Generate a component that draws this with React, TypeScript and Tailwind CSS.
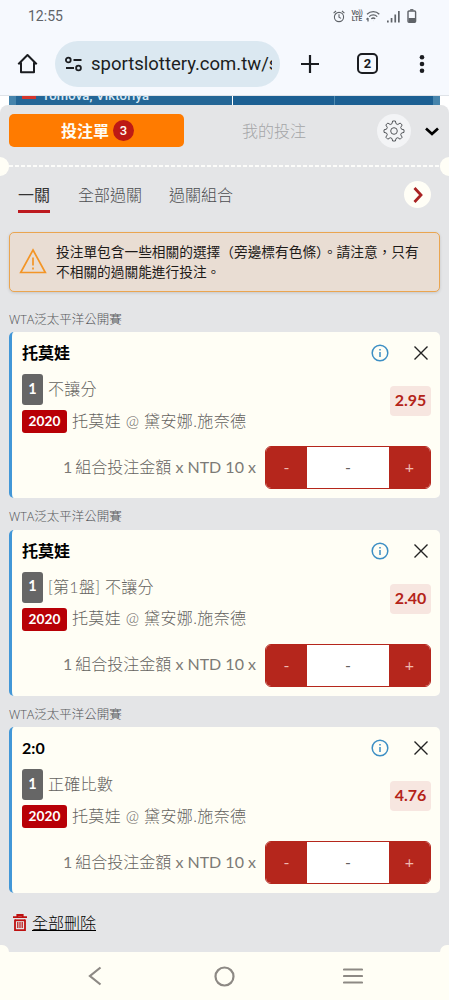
import React from 'react';

interface Bet {
  title: string;
  market: string;
  odds: string;
}

const bets: Bet[] = [
  { title: '托莫娃', market: '不讓分', odds: '2.95' },
  { title: '托莫娃', market: '[第1盤] 不讓分', odds: '2.40' },
  { title: '2:0', market: '正確比數', odds: '4.76' },
];

const StatusBar: React.FC = () => (
  <div className="flex h-8 items-center justify-between pl-7 pr-8 font-['Roboto',sans-serif] text-[#5f6368]">
    <span className="text-[14px] leading-none">12:55</span>
    <div className="flex items-center">
      <svg width="12" height="13" viewBox="0 0 12 13" fill="none" stroke="currentColor" strokeWidth="1.1">
        <circle cx="6" cy="7" r="4.6" />
        <path d="M6 4.3v2.9l2 1.2M.6 3.2 3 1M11.4 3.2 9 1" />
      </svg>
      <div className="ml-[6px] w-[12px] text-center text-[6.5px] font-bold leading-[6px]">
        <div className="tracking-[-0.3px]">Vo))</div>
        <div>LTE</div>
      </div>
      <svg className="ml-[3px]" width="14" height="12" viewBox="0 0 14 12" fill="none" stroke="currentColor" strokeWidth="1.3">
        <path d="M1 4.2C4.6.7 10 .7 13.3 4.2M3.2 6.6c2.3-2.2 5.8-2.2 8 0M5.3 8.8c1.2-1 2.8-1 3.9 0" />
        <path d="M7.2 10.5h.1M2 8v3.5M.5 9.5 2 8" />
      </svg>
      <svg className="ml-[7px]" width="13" height="13" viewBox="0 0 13 13" fill="currentColor">
        <path d="M0 10.5h1.7v2H0zM3.7 8h1.7v4.5H3.7zM7.4 4.500h1.7v8H7.4zM11 1h1.7v11.500H11z" />
      </svg>
      <svg className="ml-[7px]" width="10" height="14" viewBox="0 0 10 14" fill="none" stroke="currentColor" strokeWidth="1.4">
        <rect x="1" y="2" width="7.6" height="11.2" rx="1" />
        <path d="M3.2.8h3.2" />
        <path d="M1.5 9h6.600v4H1.500z" fill="currentColor" stroke="none" />
      </svg>
    </div>
  </div>
);

const BrowserBar: React.FC = () => (
  <div className="flex h-16 items-center border-b border-[#dfe3e8] text-[#1b1d21]">
    <svg className="ml-[17px] shrink-0" width="21" height="21" viewBox="0 0 21 21" fill="none" stroke="currentColor" strokeWidth="2" strokeLinejoin="round">
      <path d="M1.3 11.3 10.5 2l9.2 9.3M4 9.500v9.700h13V9.500" />
    </svg>
    <div className="ml-[17px] flex h-[46px] w-[225px] shrink-0 items-center rounded-full bg-[#dbe8f1] pl-[10px]">
      <svg className="shrink-0" width="18" height="16" viewBox="0 0 18 16" fill="none" stroke="currentColor" strokeWidth="1.8">
        <circle cx="3.3" cy="4" r="2.4" />
        <path d="M8.5 4h8M1 12h8" />
        <circle cx="13.5" cy="12" r="2.4" />
      </svg>
      <div className="ml-[8px] w-[181px] overflow-hidden whitespace-nowrap font-['Roboto',sans-serif] text-[18.5px] leading-6">
        sportslottery.com.tw/s
      </div>
    </div>
    <svg className="ml-[21px] shrink-0" width="18" height="18" viewBox="0 0 18 18" stroke="currentColor" strokeWidth="2.2">
      <path d="M9 0v18M0 9h18" />
    </svg>
    <div className="ml-[38px] flex h-[21px] w-[21px] shrink-0 items-center justify-center rounded-[5px] border-2 border-[#1b1d21] font-['Roboto',sans-serif] text-[13px] font-bold leading-none">
      2
    </div>
    <svg className="ml-[41px] shrink-0" width="6" height="18" viewBox="0 0 6 18" fill="currentColor">
      <circle cx="3" cy="2.3" r="2.3" />
      <circle cx="3" cy="9" r="2.3" />
      <circle cx="3" cy="15.7" r="2.3" />
    </svg>
  </div>
);

// Sliver of the match page left visible above the bet slip
const PageStrip: React.FC = () => (
  <div className="flex h-[16px] bg-white pl-[9px] pr-[9px]">
    <div className="relative h-[9px] w-[223px] overflow-hidden bg-[#246696]">
      <span className="absolute left-0 top-0 h-full w-[7px] bg-[#4684ac]" />
      <span className="absolute left-[13px] top-0 h-[3px] w-[14px] bg-[#d5352b]" />
      <span className="absolute left-[33px] top-[-8px] whitespace-nowrap font-['Roboto',sans-serif] text-[13px] font-medium leading-4 tracking-[0.2px] text-[#d7e9f5]">
        Tomova, Viktoriya
      </span>
    </div>
    <div className="ml-px h-[9px] w-[102px] border-r border-[#4f8bb1] bg-[#1c6093]" />
    <div className="h-[9px] flex-1 border-r-[7px] border-[#4684ac] bg-[#1c6093]" />
  </div>
);

const SlipHeader: React.FC = () => (
  <div className="flex h-[59px] items-start pl-[9px] pt-[8px]">
    <div className="flex h-[33px] w-[175px] items-center justify-center rounded-[5px] bg-[#ff7b00] text-[16px] font-bold text-[#fffdf3]">
      <span className="ml-[2px]">投注單</span>
      <span className="ml-[4px] flex h-[21px] w-[21px] items-center justify-center rounded-full bg-[#bd1a15] font-['Roboto',sans-serif] text-[13px] font-medium">3</span>
    </div>
    <div className="flex h-[33px] w-[180px] items-center justify-center text-[16px] font-light text-[#a5a6a8]">我的投注</div>
    <div className="ml-[13px] flex h-[34px] w-[34px] items-center justify-center rounded-full bg-[#f3f4f6]">
      <svg width="22" height="22" viewBox="0 0 22 22" fill="none" stroke="#55585c" strokeWidth="1" strokeLinejoin="round">
        <path d="M9.6 1h2.8l.6 2.7 1.8.8 2.4-1.5 2 2-1.5 2.4.8 1.8 2.5.6v2.6l-2.5.6-.8 1.8 1.5 2.4-2 2-2.4-1.5-1.8.8-.6 2.5H9.6L9 18.5l-1.8-.8-2.4 1.5-2-2 1.5-2.4-.8-1.8L1 12.4V9.8l2.5-.6.8-1.8L2.8 5l2-2 2.4 1.5L9 3.7z" />
        <circle cx="11" cy="11" r="3.3" />
      </svg>
    </div>
    <svg className="ml-[14px] mt-[13px]" width="14" height="9" viewBox="0 0 14 9" fill="none" stroke="#000" strokeWidth="2.7">
      <path d="m1 1.500 6 5.500 6-5.500" />
    </svg>
  </div>
);

const Divider: React.FC = () => (
  <div className="flex h-[2px] items-center justify-between">
    <span className="h-[19px] w-[9px] shrink-0 rounded-r-full bg-[#fffef6]" />
    <span className="h-[2px] flex-1 bg-[repeating-linear-gradient(90deg,#fcfcfa_0_4px,transparent_4px_6px)]" />
    <span className="h-[19px] w-[9px] shrink-0 rounded-l-full bg-[#fffef6]" />
  </div>
);

const SlipTabs: React.FC = () => (
  <div className="flex h-[65px] items-start pl-[18px] pt-[14px] text-[16px] font-light text-[#4c4d50]">
    <div className="h-[32px] border-b-[3px] border-[#bd1a20] font-normal leading-[28px] text-[#333]">一關</div>
    <div className="ml-[28px] leading-[28px]">全部過關</div>
    <div className="ml-[27px] leading-[28px]">過關組合</div>
    <div className="ml-auto mr-[18px] flex h-[27px] w-[27px] items-center justify-center rounded-full bg-[#fffef6]">
      <svg width="10" height="16" viewBox="0 0 10 16" fill="none" stroke="#a92222" strokeWidth="2.8">
        <path d="m1.500 1 6.500 7-6.500 7" />
      </svg>
    </div>
  </div>
);

const Warning: React.FC = () => (
  <div className="mx-[9px] flex h-[60px] items-center rounded-[5px] border-[1.5px] border-[#eaa550] bg-[#e9ddd3] pl-[9px] shadow-[0_1px_3px_rgba(80,80,80,0.2)]">
    <svg className="mt-[-3px] shrink-0" width="28" height="26" viewBox="0 0 28 26" fill="none" stroke="#f39526" strokeWidth="1.7">
      <path d="M14 2 26.3 24.500H1.700zM14 9.500v8M14 19.500v2" />
    </svg>
    <p className="ml-[9px] whitespace-nowrap text-[13.7px] leading-[20px] text-[#1d1a18]">
      投注單包含一些相關的選擇（旁邊標有色條）。請注意，只有
      <br />
      不相關的過關能進行投注。
    </p>
  </div>
);

const BetCard: React.FC<Bet> = ({ title, market, odds }) => (
  <div>
    <div className="flex h-[31.5px] items-center pl-[9px] pt-[8px] text-[12.5px] font-light text-[#55575a]">
      <span className="font-['Open_Sans',sans-serif]">WTA</span>泛太平洋公開賽
    </div>
    <div className="mx-[9px] h-[166px] rounded-[5px] border-l-[3px] border-[#4297d7] bg-[#fffef5] pl-[10px] pr-[9px] text-[#65635f]">
      <div className="flex h-[42px] items-center text-[16px] font-bold text-black">
        <span>{title}</span>
        <svg className="ml-auto" width="18" height="18" viewBox="0 0 18 18" fill="none" stroke="#3d8fc4" strokeWidth="1.5">
          <circle cx="9" cy="9" r="7.8" />
          <path d="M9 8v5M9 5v1.600" />
        </svg>
        <svg className="ml-[25px] mr-[3px]" width="14" height="14" viewBox="0 0 14 14" stroke="#222" strokeWidth="1.4">
          <path d="m.5.5 13 13m0-13-13 13" />
        </svg>
      </div>
      <div className="flex h-[59px] justify-between">
        <div className="flex flex-col gap-[5px] text-[16px] font-light leading-[22px]">
          <div className="flex h-[31px] items-center">
            <span className="mr-[5px] flex h-[31px] w-[21px] items-center justify-center rounded-[3px] bg-[#666] pb-[2px] text-[14.5px] font-bold text-white">1</span>
            <span className="-mt-px tracking-[0.3px]">{market}</span>
          </div>
          <div className="flex h-[23px] items-center">
            <span className="mr-[5px] flex h-[23px] w-[45px] items-center justify-center rounded-[3px] bg-[#b80006] pb-px text-[13.7px] font-bold text-white">2020</span>
            <span className="-mt-[2px] tracking-[0.36px]">托莫娃 @ 黛安娜.施奈德</span>
          </div>
        </div>
        <span className="mt-[12px] flex h-[30px] w-[41px] items-center justify-center rounded-[4px] bg-[#f7e6e0] pb-[2px] text-[16px] font-bold text-[#b42318]">{odds}</span>
      </div>
      <div className="mt-[13px] flex items-center justify-end">
        <span className="-mt-[2px] mr-[9px] whitespace-pre text-[16px] font-light">
          <span className="font-normal tracking-[-0.5px] text-[#7c7a76]">1 </span>
          組合投注金額
          <span className="font-normal text-[#7c7a76]"> x NTD 10 x</span>
        </span>
        <div className="flex h-[43px] w-[166px] overflow-hidden rounded-[6px] border border-[#b5261c] bg-white text-center text-[16px] font-normal leading-[40px]">
          <span className="w-[41px] bg-[#b5261c] text-[#f0b9b0]">-</span>
          <span className="flex-1">-</span>
          <span className="w-[41px] bg-[#b5261c] text-[#f0b9b0]">+</span>
        </div>
      </div>
    </div>
  </div>
);

const NavBar: React.FC = () => (
  <div className="flex h-[48px] items-center bg-[#fffef5]">
    <svg className="ml-[88px]" width="14" height="20" viewBox="0 0 14 20" fill="none" stroke="#8d8984" strokeWidth="2.2">
      <path d="M12.500 1.500 2 10l10.500 8.500" />
    </svg>
    <svg className="ml-[112px]" width="21" height="21" viewBox="0 0 21 21" fill="none" stroke="#8d8984" strokeWidth="2.2">
      <circle cx="10.5" cy="10.5" r="9" />
    </svg>
    <svg className="ml-[108px]" width="20" height="16" viewBox="0 0 20 16" stroke="#8d8984" strokeWidth="2.2" strokeLinecap="round">
      <path d="M1 1.500h18M1 8h18M1 14.500h18" />
    </svg>
  </div>
);

const App: React.FC = () => {
  return (
    <div className="flex h-[1000px] w-[449px] flex-col overflow-hidden bg-[#f6f9fe] font-['Lato','Noto_Sans_CJK_TC',sans-serif]">
      <StatusBar />
      <BrowserBar />
      <PageStrip />
      <div className="relative -mt-[7px] flex h-[847px] flex-col rounded-t-[8px] bg-[#e4e5e7] pt-px">
        <SlipHeader />
        <Divider />
        <SlipTabs />
        <Warning />
        <div className="pt-[8.5px]">
          {bets.map((bet, index) => (
            <BetCard key={index} {...bet} />
          ))}
        </div>
        <div className="flex flex-1 items-center pl-[13px] text-[16px] font-light text-black">
          <svg width="14" height="18" viewBox="0 0 14 18" fill="none" stroke="#bd1010" strokeWidth="1.8">
            <path d="M0 3.200h14M4.300 3V1h5.400v2M2 5.500v10.700h10V5.500" />
            <path d="M2 6.300h10" />
            <path d="M4.800 8v6M7 8v6M9.200 8v6" strokeWidth="1.2" />
          </svg>
          <span className="ml-[5px] underline">全部刪除</span>
        </div>
        <div className="-mt-[7px] flex h-[7px] justify-between">
          <span className="h-[7px] w-[9px] rounded-tr-[8px] bg-[#fffef5]" />
          <span className="h-[7px] w-[9px] rounded-tl-[8px] bg-[#fffef5]" />
        </div>
      </div>
      <NavBar />
    </div>
  );
};

export default App;
